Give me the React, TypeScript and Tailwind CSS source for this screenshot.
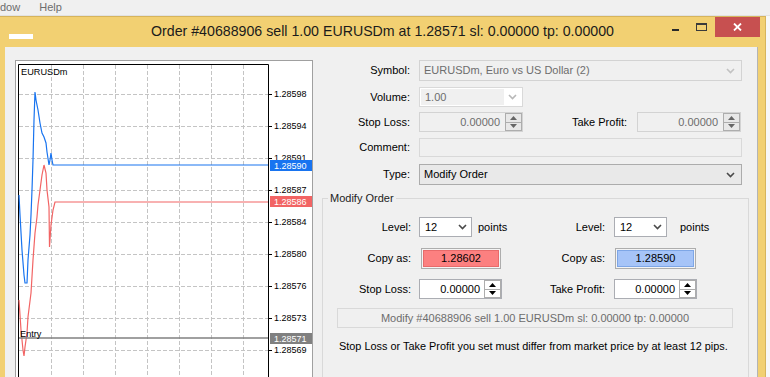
import React from "react";

const levels: [number, string][] = [
  [94, "1.28598"],
  [126, "1.28594"],
  [158, "1.28591"],
  [190, "1.28587"],
  [222, "1.28584"],
  [254, "1.28580"],
  [286, "1.28576"],
  [318, "1.28573"],
  [350, "1.28569"],
  [382, "1.28566"],
];
const gridX = [51, 83, 115, 147, 179, 211, 243];

const bluePts =
  "19,195 20,215 22,250 24,275 25,283 27,283 28,260 30,235 31,215 32,190 33,160 34,120 35,92 36,100 38,110 40,123 42,133 44,137 46,143 47,152 49,165 50,160 51,153 52,160 53,165 268,165";
const redPts =
  "19,300 21,330 23,350 24,356 25,347 27,333 28,317 31,293 33,260 35,233 37,217 38,205 40,190 42,175 44,165 46,173 47,190 49,207 49.5,247 51,225 53,210 55,202 268,202";

const Chevron = ({ color = "#4a4a4a" }: { color?: string }) => (
  <svg width="9" height="6" viewBox="0 0 9 6">
    <polyline points="1,1 4.5,4.5 8,1" fill="none" stroke={color} strokeWidth="1.6" />
  </svg>
);

const Spin = ({ color, bg }: { color: string; bg: string }) => (
  <div className={`flex h-full w-[17px] flex-col border border-[#adadad] ${bg}`}>
    <div className="flex flex-1 items-center justify-center border-b border-[#adadad]">
      <svg width="7" height="4" viewBox="0 0 7 4">
        <polygon points="3.5,0 7,4 0,4" fill={color} />
      </svg>
    </div>
    <div className="flex flex-1 items-center justify-center">
      <svg width="7" height="4" viewBox="0 0 7 4">
        <polygon points="0,0 7,0 3.5,4" fill={color} />
      </svg>
    </div>
  </div>
);

const Chart = () => (
  <svg width="296" height="330" viewBox="16 61 296 330" className="block">
    {gridX.map((x) => (
      <line key={x} x1={x + 0.5} y1={65} x2={x + 0.5} y2={400} stroke="#c4c4c4" strokeDasharray="4 2" />
    ))}
    {levels.map(([y]) => (
      <line key={y} x1={19} y1={y + 0.5} x2={268} y2={y + 0.5} stroke="#c4c4c4" strokeDasharray="4 2" />
    ))}
    {levels.map(([y]) => (
      <line key={"t" + y} x1={268} y1={y + 0.5} x2={272} y2={y + 0.5} stroke="#000" />
    ))}
    <path d="M18.5 400 V64.5 H268.5 V400" fill="none" stroke="#000" />
    {levels.map(([y, t]) => (
      <text key={"l" + y} x={274} y={y + 3.3} fontSize="9" fontFamily="Liberation Sans, Arial, sans-serif" fill="#000">
        {t}
      </text>
    ))}
    <text x={21} y={75} fontSize="9.2" fontFamily="Liberation Sans, Arial, sans-serif" fill="#000">
      EURUSDm
    </text>
    <polyline points={bluePts} fill="none" stroke="#1874f0" strokeWidth="1.2" />
    <polyline points={redPts} fill="none" stroke="#f26464" strokeWidth="1.2" />
    <line x1={19} y1={338} x2={268} y2={338} stroke="#808080" strokeWidth="1.3" />
    <text x={20} y={337} fontSize="9.2" fontFamily="Liberation Sans, Arial, sans-serif" fill="#000">
      Entry
    </text>
    <rect x={270} y={160} width={42} height={11} fill="#1874f0" />
    <text x={274} y={168.5} fontSize="9" fontFamily="Liberation Sans, Arial, sans-serif" fill="#fff">1.28590</text>
    <rect x={270} y={196} width={42} height={11} fill="#f26464" />
    <text x={274} y={204.5} fontSize="9" fontFamily="Liberation Sans, Arial, sans-serif" fill="#fff">1.28586</text>
    <rect x={270} y={333} width={42} height={11} fill="#808080" />
    <text x={274} y={341.5} fontSize="9" fontFamily="Liberation Sans, Arial, sans-serif" fill="#fff">1.28571</text>
  </svg>
);

export default function App() {
  return (
    <div className="flex h-[377px] w-[770px] flex-col overflow-hidden bg-[#f0f0f0] font-['Liberation_Sans',Arial,sans-serif] text-[11px] text-black">
      {/* menu bar behind the dialog */}
      <div className="flex h-[16px] shrink-0 items-center border-b border-[#e2e2e2] bg-[#f0f0f0] text-[#6d6d6d]">
        <span>dow</span>
        <span className="ml-[19px]">Help</span>
      </div>

      <div className="flex min-h-0 flex-1">
        <div className="flex w-[766px] shrink-0 flex-col border-t border-r border-[#d6b45c] bg-[#f2d072]">
          {/* title bar */}
          <div className="grid h-[30px] shrink-0 grid-cols-[1fr_auto_1fr]">
            <div className="flex items-start">
              <div className="ml-[9px] mt-[17px] h-[5px] w-[24px] bg-white" />
            </div>
            <div className="flex items-center text-[14.2px] text-[#1b1b1b]">
              Order #40688906 sell 1.00 EURUSDm at 1.28571 sl: 0.00000 tp: 0.00000
            </div>
            <div className="flex items-start justify-end pr-[5px]">
              <div className="flex h-[20px] w-[26px] items-end justify-center pb-[6px]">
                <div className="h-[2px] w-[7px] bg-[#2a2a2a]" />
              </div>
              <div className="flex h-[20px] w-[27px] justify-center pt-[6px]">
                <div className="h-[8px] w-[11px] border border-t-2 border-[#3a3a3a]" />
              </div>
              <div className="flex h-[20px] w-[45px] items-center justify-center bg-[#c75050]">
                <svg width="9" height="8" viewBox="0 0 9 8">
                  <path d="M1 0.5 L8 7.5 M8 0.5 L1 7.5" stroke="#fff" strokeWidth="1.8" />
                </svg>
              </div>
            </div>
          </div>

          {/* client area */}
          <div className="ml-[5px] mr-[7px] flex min-h-0 flex-1 items-start border-r border-[#b4b4b4] bg-[#f0f0f0] pt-[13px]">
            <div className="ml-[10px] h-[330px] w-[298px] shrink-0 overflow-hidden border-x border-t border-[#a0a0a0] bg-white">
              <Chart />
            </div>

            <div className="flex flex-1 flex-col">
              <div className="flex h-[21px] items-center">
                <div className="w-[97px] text-right">Symbol:</div>
                <div className="ml-[9px] flex h-full w-[323px] items-center justify-between border border-[#d3d3d3] bg-[#f0f0f0] pl-[4px] pr-[6px] text-[#6d6d6d]">
                  <span>EURUSDm, Euro vs US Dollar (2)</span>
                  <Chevron color="#c2c2c2" />
                </div>
              </div>

              <div className="mt-[6px] flex h-[20px] items-center">
                <div className="w-[97px] text-right">Volume:</div>
                <div className="ml-[9px] flex h-full w-[104px] items-center border border-[#d9d9d9] bg-white p-[1px]">
                  <div className="flex h-full w-[83px] items-center bg-[#f0f0f0] pl-[4px] text-[#6d6d6d]">1.00</div>
                  <div className="flex flex-1 justify-center">
                    <Chevron color="#b8b8b8" />
                  </div>
                </div>
              </div>

              <div className="mt-[5px] flex h-[20px] items-center">
                <div className="w-[97px] text-right">Stop Loss:</div>
                <div className="ml-[9px] flex h-full w-[104px] items-center border border-[#d3d3d3] bg-[#f0f0f0]">
                  <div className="flex-1 pr-[5px] text-right text-[#6d6d6d]">0.00000</div>
                  <Spin color="#666" bg="bg-[#e8e8e8]" />
                </div>
                <div className="w-[104px] text-right">Take Profit:</div>
                <div className="ml-[10px] flex h-full w-[104px] items-center border border-[#d3d3d3] bg-[#f0f0f0]">
                  <div className="flex-1 pr-[5px] text-right text-[#6d6d6d]">0.00000</div>
                  <Spin color="#666" bg="bg-[#e8e8e8]" />
                </div>
              </div>

              <div className="mt-[6px] flex h-[19px] items-center">
                <div className="w-[97px] text-right">Comment:</div>
                <div className="ml-[9px] h-full w-[323px] border border-[#d9d9d9] bg-[#f0f0f0]" />
              </div>

              <div className="mt-[7px] flex h-[21px] items-center">
                <div className="w-[97px] text-right">Type:</div>
                <div className="ml-[9px] flex h-full w-[323px] items-center justify-between border border-[#acacac] bg-[#e9e9e9] pl-[4px] pr-[6px]">
                  <span>Modify Order</span>
                  <Chevron />
                </div>
              </div>

              <fieldset className="ml-[9px] mt-[7px] h-[200px] w-[427px] border border-[#d9d9d9]">
                <legend className="ml-[5px] px-[2px] leading-[13px] text-[#222]">Modify Order</legend>

                <div className="mt-[12px] flex h-[20px] items-center">
                  <div className="flex w-[197px] items-center">
                    <div className="w-[88px] text-right">Level:</div>
                    <div className="ml-[8px] flex h-[20px] w-[53px] items-center justify-between border border-[#abadb3] bg-white pl-[5px] pr-[4px]">
                      <span>12</span>
                      <Chevron />
                    </div>
                    <span className="ml-[6px]">points</span>
                  </div>
                  <div className="w-[85px] text-right">Level:</div>
                  <div className="ml-[9px] flex h-[20px] w-[53px] items-center justify-between border border-[#abadb3] bg-white pl-[5px] pr-[4px]">
                    <span>12</span>
                    <Chevron />
                  </div>
                  <span className="ml-[13px]">points</span>
                </div>

                <div className="mt-[11px] flex h-[21px] items-center">
                  <div className="flex w-[197px] items-center">
                    <div className="w-[88px] text-right">Copy as:</div>
                    <div className="ml-[10px] h-[21px] w-[80px] border border-[#adadad] bg-[#f4f4f4] p-[1px]">
                      <div className="flex h-full items-center justify-center border border-[#e86a6a] bg-[#fc8080]">1.28602</div>
                    </div>
                  </div>
                  <div className="w-[85px] text-right">Copy as:</div>
                  <div className="ml-[10px] h-[21px] w-[81px] border border-[#adadad] bg-[#f4f4f4] p-[1px]">
                    <div className="flex h-full items-center justify-center border border-[#7ea6e6] bg-[#a6c4f8]">1.28590</div>
                  </div>
                </div>

                <div className="mt-[10px] flex h-[20px] items-center">
                  <div className="flex w-[197px] items-center">
                    <div className="w-[88px] text-right">Stop Loss:</div>
                    <div className="ml-[8px] flex h-[20px] w-[83px] items-center border border-[#abadb3] bg-white">
                      <div className="flex-1 pr-[4px] text-right">0.00000</div>
                      <Spin color="#000" bg="bg-white" />
                    </div>
                  </div>
                  <div className="w-[85px] text-right">Take Profit:</div>
                  <div className="ml-[9px] flex h-[20px] w-[83px] items-center border border-[#abadb3] bg-white">
                    <div className="flex-1 pr-[4px] text-right">0.00000</div>
                    <Spin color="#000" bg="bg-white" />
                  </div>
                </div>

                <div className="ml-[14px] mt-[9px] flex h-[20px] w-[396px] items-center justify-center border border-[#d9d9d9] text-[#6d6d6d]">
                  Modify #40688906 sell 1.00 EURUSDm sl: 0.00000 tp: 0.00000
                </div>

                <div className="ml-[16px] mt-[10px] text-[10.9px]">
                  Stop Loss or Take Profit you set must differ from market price by at least 12 pips.
                </div>
              </fieldset>
            </div>
          </div>
        </div>
        <div className="flex-1 bg-[#f7f7f7]" />
      </div>
    </div>
  );
}
